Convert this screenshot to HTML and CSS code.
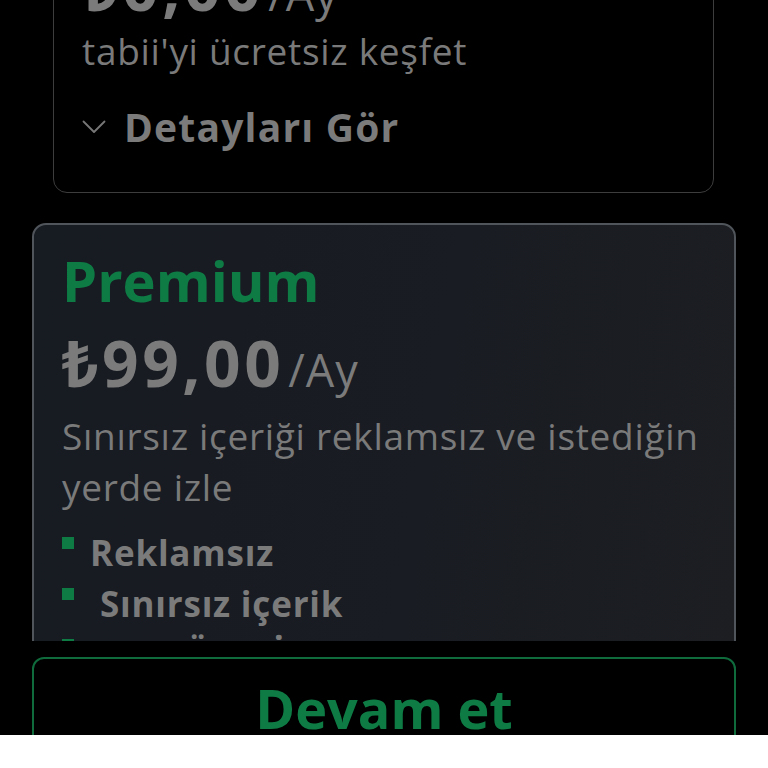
FILE: index.html
```html
<!DOCTYPE html>
<html lang="tr">
<head>
<meta charset="utf-8">
<title>tabii</title>
<link rel="stylesheet" href="styles.css">
</head>
<body>
<div class="screen">
  <div class="scroller">
    <div class="plans">
      <section class="plan plan-free">
        <div class="price"><span class="amount">₺0,00</span><span class="period">/Ay</span></div>
        <p class="desc">tabii'yi ücretsiz keşfet</p>
        <div class="details">
          <svg class="chev" viewBox="0 0 24 14" width="24" height="14"><path d="M1.5 1.5 L12 12 L22.5 1.5" fill="none" stroke="#777" stroke-width="1.8" stroke-linecap="round" stroke-linejoin="round"/></svg>
          <span>Detayları Gör</span>
        </div>
      </section>
      <section class="plan plan-premium">
        <h2 class="name">Premium</h2>
        <div class="price"><span class="amount">₺99,00</span><span class="period">/Ay</span></div>
        <p class="desc">Sınırsız içeriği reklamsız ve istediğin yerde izle</p>
        <ul class="features">
          <li><span class="dot"></span><span>Reklamsız</span></li>
          <li><span class="dot"></span><span>&nbsp;Sınırsız içerik</span></li>
          <li><span class="dot"></span><span>tabii Özel İçerikleri</span></li>
        </ul>
      </section>
    </div>
  </div>
  <div class="footer">
    <button class="cta">Devam et</button>
  </div>
</div>
<div class="bottom-white"></div>
</body>
</html>
```
FILE: styles.css
```css
html, body {
  margin: 0;
  padding: 0;
  background: #000;
  height: 768px;
  overflow: hidden;
  font-family: "Open Sans", "Noto Sans", sans-serif;
}
.screen {
  height: 735px;
  overflow: hidden;
  background: #000;
  display: flex;
  flex-direction: column;
}
.scroller {
  height: 641px;
  flex: none;
  overflow: hidden;
}
.plans {
  display: flex;
  flex-direction: column;
  gap: 30px;
  margin-top: -52px;
  padding: 0 32px;
}
.plan {
  box-sizing: border-box;
  border-radius: 14px;
  padding: 0 28px;
}
.plan-free {
  width: 661px;
  margin-left: 21px;
  border: 1.5px solid #3d3d3d;
  padding-bottom: 40px;
}
.price {
  display: flex;
  align-items: baseline;
  color: #7b7b7b;
  height: 76px;
  line-height: 76px;
}
.amount {
  font-size: 64px;
  font-weight: 700;
  letter-spacing: 3.5px;
}
.period {
  font-size: 45px;
  font-weight: 400;
  margin-left: 4px;
  letter-spacing: 1px;
}
.desc {
  margin: 0;
  color: #7a7a7a;
  font-size: 37px;
  line-height: 51px;
  font-weight: 400;
  letter-spacing: 0.7px;
}
.plan-premium .desc {
  margin-top: 9px;
}
.details {
  display: flex;
  align-items: center;
  gap: 18px;
  margin-top: 26px;
  color: #7b7b7b;
  font-size: 39px;
  font-weight: 700;
  line-height: 50px;
  letter-spacing: 1.2px;
}
.chev {
  display: block;
}
.plan-premium {
  border: 2px solid #50555b;
  background: linear-gradient(100deg, #171b22 0%, #191c22 55%, #1c1e22 100%);
  padding-top: 20px;
  padding-bottom: 40px;
}
.name {
  margin: 0;
  color: #0e7b45;
  font-size: 56px;
  font-weight: 700;
  line-height: 70px;
}
.plan-premium .price {
  margin-top: 10px;
}
.features {
  list-style: none;
  margin: 15px 0 0;
  padding: 0;
}
.features li {
  display: flex;
  align-items: flex-start;
  gap: 16px;
  color: #7b7b7b;
  font-size: 35px;
  font-weight: 700;
  line-height: 51px;
  letter-spacing: 0.8px;
}
.dot {
  width: 12px;
  height: 12px;
  background: #0e7b45;
  margin-top: 10px;
  flex: none;
}
.footer {
  flex: 1;
  background: #000;
  padding: 16px 32px 0;
}
.cta {
  display: block;
  box-sizing: border-box;
  width: 100%;
  height: 110px;
  background: #000;
  border: 2px solid #0f6a3c;
  border-radius: 12px;
  color: #0e7b45;
  font-family: inherit;
  font-size: 54px;
  font-weight: 700;
  line-height: 1;
  padding: 0;
  display: flex;
  align-items: flex-start;
  justify-content: center;
  padding-top: 22px;
}
.bottom-white {
  height: 33px;
  background: #fff;
}
```
